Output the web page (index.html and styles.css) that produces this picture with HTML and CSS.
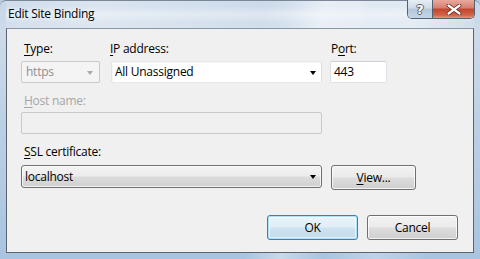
FILE: index.html
```html
<!DOCTYPE html>
<html>
<head>
<meta charset="utf-8">
<title>Edit Site Binding</title>
<link rel="stylesheet" href="styles.css">
</head>
<body>
<div class="window">
  <div class="titlebar">
    <span class="title">Edit Site Binding</span>
    <div class="caption-buttons">
      <div class="cap-btn help">?</div>
      <div class="cap-btn close">
        <svg width="16" height="11" viewBox="0 0 16 11"><path d="M2.5 1.5 L13.5 9.5 M13.5 1.5 L2.5 9.5" stroke="#5a1a12" stroke-width="3.8" stroke-linecap="round"/><path d="M2.5 1.5 L13.5 9.5 M13.5 1.5 L2.5 9.5" stroke="#fff" stroke-width="2.3" stroke-linecap="round"/></svg>
      </div>
    </div>
  </div>
  <div class="client">
    <div class="row1">
      <div class="field f-type">
        <div class="label"><u>T</u>ype:</div>
        <div class="combo disabled">
          <span class="value">https</span>
          <span class="arrow grey"></span>
        </div>
      </div>
      <div class="field f-ip">
        <div class="label"><u>I</u>P address:</div>
        <div class="combo editable">
          <span class="value">All Unassigned</span>
          <span class="arrow"></span>
        </div>
      </div>
      <div class="field f-port">
        <div class="label">P<u>o</u>rt:</div>
        <div class="textbox"><span class="value">443</span></div>
      </div>
    </div>
    <div class="label disabled-label host-label"><u>H</u>ost name:</div>
    <div class="textbox disabled-box host-box"></div>
    <div class="label ssl-label"><u>S</u>SL certificate:</div>
    <div class="row-ssl">
      <div class="combo dropdown ssl-combo">
        <span class="value">localhost</span>
        <span class="arrow"></span>
      </div>
      <div class="button view-btn"><u>V</u>iew...</div>
    </div>
    <div class="row-buttons">
      <div class="button default ok-btn">OK</div>
      <div class="button cancel-btn">Cancel</div>
    </div>
  </div>
</div>
</body>
</html>
```

FILE: styles.css
```css
html, body {
  margin: 0;
  padding: 0;
  width: 480px;
  height: 259px;
  overflow: hidden;
  background: #b9cde2;
  font-family: "Open Sans", "Noto Sans", sans-serif;
  font-size: 12px;
  letter-spacing: -0.25px;
  color: #000;
}

.window {
  box-sizing: border-box;
  width: 480px;
  height: 259px;
  padding: 0 6px 6px 6px;
  background:
    linear-gradient(100deg, rgba(255,255,255,0) 55%, rgba(255,255,255,0.35) 62%, rgba(255,255,255,0) 70%, rgba(255,255,255,0.25) 80%, rgba(255,255,255,0) 90%),
    linear-gradient(180deg, #c6d6e8 0px, #cddbea 30px, #bcd0e5 120px, #a9c4e0 259px);
  border-radius: 6px 6px 0 0;
  border-top: 1px solid #7b8796;
  display: flex;
  flex-direction: column;
}

.titlebar {
  height: 27px;
  display: flex;
  align-items: flex-start;
  justify-content: space-between;
  background:
    linear-gradient(180deg, rgba(255,255,255,0) 20%, rgba(255,255,255,0.35) 50%, rgba(255,255,255,0) 80%),
    linear-gradient(90deg, rgba(255,255,255,0.15) 0%, rgba(255,255,255,0.35) 20%, rgba(255,255,255,0.1) 55%, rgba(255,255,255,0.5) 75%, rgba(255,255,255,0.1) 100%);
}

.title {
  padding: 5px 0 0 2px;
  font-size: 12px;
  line-height: 16px;
  color: #000;
  text-shadow: 0 0 6px rgba(255,255,255,0.9);
}

.caption-buttons {
  display: flex;
  margin-right: -1px;
  margin-top: -1px;
  border: 1px solid #54616f;
  border-top: none;
  border-radius: 0 0 5px 5px;
  overflow: hidden;
}

.cap-btn {
  height: 18px;
  display: flex;
  align-items: center;
  justify-content: center;
}

.help {
  width: 24px;
  border-right: 1px solid #54616f;
  background: linear-gradient(180deg, #e6edf4 0%, #cfdbe7 45%, #b5c6d8 50%, #c5d5e5 100%);
  color: #fff;
  font-family: "DejaVu Sans", sans-serif;
  font-size: 13px;
  font-weight: bold;
  letter-spacing: 0;
  text-shadow: -1px 0 #55606d, 1px 0 #55606d, 0 -1px #55606d, 0 1px #55606d;
}

.close {
  width: 41px;
  background: linear-gradient(180deg, #e9a99c 0%, #d47f6f 45%, #c2432c 50%, #d0664b 85%, #e39a7e 100%);
}

.client {
  flex: 1;
  border: 1px solid #5b6570;
  border-top-color: #8c96a2;
  background: #f0f0f0;
  padding: 12px 0 0 14px;
  display: flex;
  flex-direction: column;
  align-items: flex-start;
}

.row1 {
  display: flex;
}

.field {
  display: flex;
  flex-direction: column;
}

.f-type { width: 79px; margin-right: 11px; }
.f-ip { width: 211px; margin-right: 8px; }
.f-port { width: 57px; }

.label {
  line-height: 16px;
  height: 16px;
  margin-bottom: 4px;
  white-space: nowrap;
}

.f-type .label { padding-left: 3px; }
.f-ip .label { padding-left: 0; margin-left: -1px; }
.f-port .label { padding-left: 1px; }

.label u, .button u {
  text-decoration: underline;
  text-underline-offset: 2px;
}

.disabled-label { color: #a6a6a6; }

.combo, .textbox {
  box-sizing: border-box;
  height: 22px;
  display: flex;
  align-items: center;
  position: relative;
  border-radius: 2px;
}

.value {
  padding-left: 4px;
  line-height: 16px;
}

.combo.disabled {
  border: 1px solid #c9c9c9;
  background: #f4f4f4;
  color: #8f8f8f;
}

.combo.editable {
  border: 1px solid #abadb3;
  border-top-color: #e3e9ef;
  border-left-color: #e2e3ea;
  border-right-color: #dbdfe6;
  border-bottom-color: #e3e9ef;
  background: #fff;
  box-shadow: inset 1px 1px 0 #f6f6f6;
}
.combo.editable .value { padding-left: 3px; }

.arrow {
  position: absolute;
  right: 5px;
  top: 9px;
  width: 0;
  height: 0;
  border-left: 3.5px solid transparent;
  border-right: 3.5px solid transparent;
  border-top: 4px solid #000;
}
.arrow.grey { border-top-color: #a9a9a9; right: 6px; }

.textbox {
  width: 57px;
  border: 1px solid #dde2e8;
  border-top-color: #c9d0d8;
  background: #fff;
}
.textbox .value { padding-left: 3px; }

.host-label {
  margin-top: 10px;
  margin-left: 3px;
  margin-bottom: 3px;
}

.textbox.disabled-box {
  width: 301px;
  height: 22px;
  border: 1px solid #c9c9c9;
  background: #f0f0f0;
}

.ssl-label {
  margin-top: 10px;
  margin-left: 3px;
  margin-bottom: 5px;
}

.row-ssl {
  display: flex;
  align-items: flex-start;
}

.combo.dropdown {
  width: 301px;
  height: 23px;
  border: 1px solid #707070;
  border-radius: 3px;
  background: linear-gradient(180deg, #f4f4f4 0%, #ececec 48%, #dcdcdc 52%, #d0d0d0 100%);
  box-shadow: inset 0 0 0 1px rgba(255,255,255,0.7);
}
.combo.dropdown .value { padding-left: 3px; }

.button {
  box-sizing: border-box;
  height: 25px;
  border: 1px solid #707070;
  border-radius: 3px;
  background: linear-gradient(180deg, #f2f2f2 0%, #ebebeb 48%, #dddddd 52%, #cfcfcf 100%);
  box-shadow: inset 0 0 0 1px rgba(255,255,255,0.75);
  display: flex;
  align-items: center;
  justify-content: center;
  line-height: 16px;
}

.view-btn {
  width: 85px;
  margin-left: 9px;
}

.row-buttons {
  display: flex;
  align-self: stretch;
  justify-content: flex-end;
  margin-top: 25px;
  margin-right: 15px;
}

.ok-btn, .cancel-btn {
  width: 91px;
  height: 25px;
}

.cancel-btn { margin-left: 9px; }

.button.default {
  border-color: #3c7fb1;
  background: linear-gradient(180deg, #eaf4fa 0%, #e0eef7 48%, #cfe3f0 52%, #c2dbec 100%);
  box-shadow: inset 0 0 0 1px #aee1f7, inset 0 0 0 2px rgba(255,255,255,0.5);
}
```
